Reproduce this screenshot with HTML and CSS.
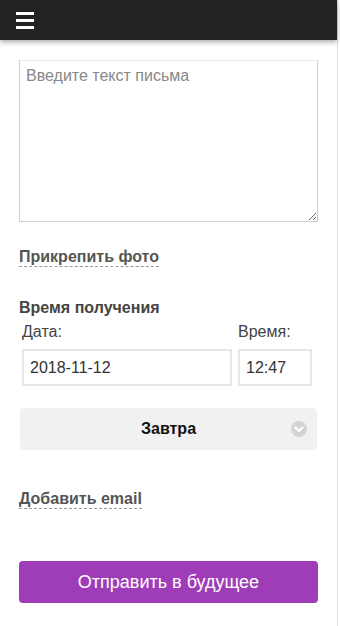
FILE: index.html
```html
<!DOCTYPE html>
<html lang="ru">
<head>
  <meta charset="UTF-8" />
  <meta name="viewport" content="width=device-width, initial-scale=1" />
  <title>Письмо в будущее</title>
  <link rel="stylesheet" href="styles.css">
</head>
<body>
  <div class="page">
    <!-- Top bar -->
    <header class="topbar">
      <button class="menu-btn" aria-label="Меню">
        <span></span><span></span><span></span>
      </button>
    </header>

    <main class="form">
      <textarea class="letter" placeholder="Введите текст письма"></textarea>

      <div class="row-link attach">
        <a href="#" class="dashed">Прикрепить фото</a>
      </div>

      <h3 class="section-title">Время получения</h3>
      <div class="datetime">
        <div class="field date">
          <label for="date">Дата:</label>
          <input id="date" type="text" value="2018-11-12">
        </div>
        <div class="field time">
          <label for="time">Время:</label>
          <input id="time" type="text" value="12:47">
        </div>
      </div>

      <div class="select">
        <span>Завтра</span>
        <svg class="chevron" width="16" height="16" viewBox="0 0 16 16">
          <circle cx="8" cy="8" r="8" fill="#d4d4d4"/>
          <path d="M4.5 6.5 L8 10 L11.5 6.5" fill="none" stroke="#fff" stroke-width="2.2" stroke-linecap="round" stroke-linejoin="round"/>
        </svg>
      </div>

      <div class="row-link email">
        <a href="#" class="dashed">Добавить email</a>
      </div>

      <button class="send-btn">Отправить в будущее</button>
    </main>
  </div>
</body>
</html>
```

FILE: styles.css
```css
body {
  margin: 0;
  font-family: "Liberation Sans", Arial, sans-serif;
  background-color: #fff;
  color: #444;
}

.page {
  width: 338px;
  min-height: 626px;
  border-right: 1px solid #e4e4e4;
  box-sizing: border-box;
}

.topbar {
  height: 40px;
  background-color: #222;
  box-shadow: 0 2px 5px rgba(0, 0, 0, 0.35);
  display: flex;
  align-items: center;
  padding-left: 16px;
}

.menu-btn {
  background: none;
  border: none;
  padding: 0;
  width: 18px;
  display: flex;
  flex-direction: column;
  gap: 4px;
  cursor: pointer;
}

.menu-btn span {
  display: block;
  height: 3px;
  background-color: #fff;
}

.form {
  padding: 20px 20px 0 19px;
  display: flex;
  flex-direction: column;
}

.letter {
  width: 299px;
  height: 162px;
  box-sizing: border-box;
  border: 1px solid #d0d0d0;
  border-top-color: #e8e8e8;
  padding: 6px 6px;
  font-family: "Liberation Sans", Arial, sans-serif;
  font-size: 16px;
  resize: vertical;
  margin: 0;
}

.letter::placeholder {
  color: #888;
}

.row-link {
  font-size: 16px;
  font-weight: bold;
}

.attach {
  margin-top: 26px;
}

.email {
  margin-top: 40px;
}

.dashed {
  color: #555;
  text-decoration: none;
  border-bottom: 1px dashed #999;
  padding-bottom: 1px;
}

.section-title {
  font-size: 16px;
  margin: 33px 0 0;
  color: #444;
}

.datetime {
  display: flex;
  gap: 6px;
  margin-top: 6px;
  padding-left: 3px;
}

.field label {
  display: block;
  font-size: 16px;
  color: #444;
  margin-bottom: 8px;
}

.field input {
  height: 37px;
  box-sizing: border-box;
  border: 2px solid #e6e6e6;
  padding: 0 6px;
  font-family: "Liberation Sans", Arial, sans-serif;
  font-size: 16px;
  color: #333;
}

.date input {
  width: 210px;
}

.time input {
  width: 74px;
}

.select {
  margin-top: 22px;
  margin-left: 1px;
  width: 297px;
  height: 42px;
  background-color: #f1f1f1;
  border-radius: 4px;
  display: flex;
  align-items: center;
  justify-content: center;
  position: relative;
  font-size: 16px;
  font-weight: bold;
  color: #111;
}

.chevron {
  position: absolute;
  right: 10px;
  top: 13px;
}

.send-btn {
  margin-top: 53px;
  width: 299px;
  height: 42px;
  background-color: #9f3db8;
  color: #fff;
  border: none;
  border-radius: 4px;
  font-family: "Liberation Sans", Arial, sans-serif;
  font-size: 18px;
  cursor: pointer;
}
```
